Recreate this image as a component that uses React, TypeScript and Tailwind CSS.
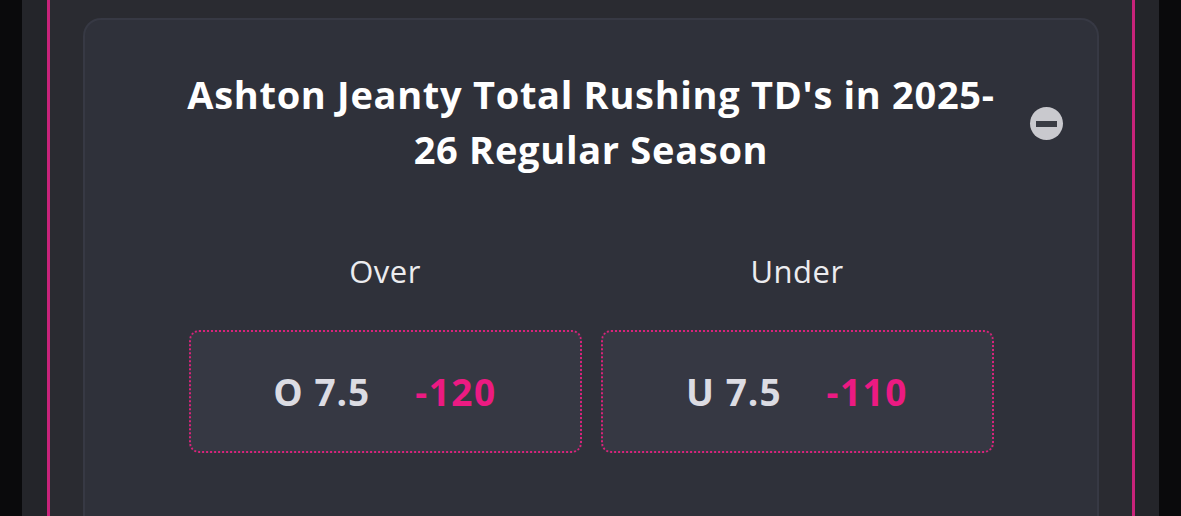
import React from "react";

const font = { fontFamily: "'Open Sans', Lato, sans-serif" };

function Bet({ side, line, odds }: { side: string; line: string; odds: string }) {
  return (
    <div className="flex h-[123px] w-[393px] items-center justify-center gap-[45px] rounded-[10px] border-2 border-dotted border-[#d8237a] bg-[#363843]">
      <span className="text-[37px] font-bold tracking-[1px] text-[#dcdce3]">
        {side} {line}
      </span>
      <span className="text-[37px] font-bold tracking-[1.5px] text-[#ec1a82]">{odds}</span>
    </div>
  );
}

export default function App() {
  return (
    <div className="flex h-[516px] w-[1181px] overflow-hidden bg-[#0a0a0c]" style={font}>
      <div className="w-[22px] bg-[#0a0a0c]" />
      <div className="w-[25px] bg-[#24252a]" />
      <div className="w-[3px] bg-[#c8237a]" />
      <div className="flex flex-1 flex-col bg-[#2a2b31] px-[33px] pt-[18px]">
        <div className="relative flex-1 rounded-t-[18px] border-2 border-b-0 border-[#373944] bg-[#2f313a]">
          <div className="absolute right-[34px] top-[87px] flex h-[33px] w-[33px] items-center justify-center rounded-full bg-[#c9c9ce]">
            <div className="h-[6px] w-[21px] bg-[#3a3c44]" />
          </div>
          <h1 className="pt-[47px] text-center text-[38px] font-bold leading-[55px] tracking-[0.7px] text-white">
            Ashton Jeanty Total Rushing TD's in 2025-
            <br />
            26 Regular Season
          </h1>
          <div className="mt-[74px] flex justify-center gap-[19px]">
            <div className="flex w-[393px] flex-col items-center">
              <div className="text-[31px] leading-[40px] tracking-[0.5px] text-[#ececef]">Over</div>
              <div className="mt-[39px]">
                <Bet side="O" line="7.5" odds="-120" />
              </div>
            </div>
            <div className="flex w-[393px] flex-col items-center">
              <div className="text-[31px] leading-[40px] tracking-[0.5px] text-[#ececef]">Under</div>
              <div className="mt-[39px]">
                <Bet side="U" line="7.5" odds="-110" />
              </div>
            </div>
          </div>
        </div>
      </div>
      <div className="w-[3px] bg-[#c8237a]" />
      <div className="w-[24px] bg-[#24252a]" />
      <div className="w-[22px] bg-[#0a0a0c]" />
    </div>
  );
}
